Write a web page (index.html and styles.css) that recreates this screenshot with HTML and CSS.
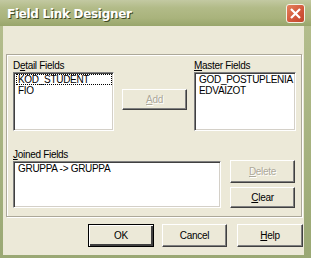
FILE: index.html
```html
<!DOCTYPE html>
<html>
<head>
    <title>Field Link Designer</title>
    <link rel="stylesheet" href="styles.css">
</head>
<body>
    <div class="window">
        <div class="titlebar">
            <span class="title">Field Link Designer</span>
            <div class="close-btn">
                <svg width="11" height="11" viewBox="0 0 11 11">
                    <path d="M1 1 L10 10 M10 1 L1 10" stroke="#fff" stroke-width="2.2"/>
                </svg>
            </div>
        </div>

        <div class="client">
            <div class="group">
                <div class="top-row">
                    <div class="field-col detail-col">
                        <div class="label">D<u>e</u>tail Fields</div>
                        <div class="listbox detail-list">
                            <div class="item focused">KOD_STUDENT</div>
                            <div class="item">FIO</div>
                        </div>
                    </div>

                    <div class="add-col">
                        <div class="btn disabled add-btn"><u>A</u>dd</div>
                    </div>

                    <div class="field-col master-col">
                        <div class="label"><u>M</u>aster Fields</div>
                        <div class="listbox master-list">
                            <div class="item">GOD_POSTUPLENIA</div>
                            <div class="item">EDVAIZOT</div>
                        </div>
                    </div>
                </div>

                <div class="bottom-row">
                    <div class="field-col joined-col">
                        <div class="label"><u>J</u>oined Fields</div>
                        <div class="listbox joined-list">
                            <div class="item">GRUPPA -&gt; GRUPPA</div>
                        </div>
                    </div>

                    <div class="side-buttons">
                        <div class="btn disabled delete-btn"><u>D</u>elete</div>
                        <div class="btn clear-btn"><u>C</u>lear</div>
                    </div>
                </div>
            </div>

            <div class="dialog-buttons">
                <div class="btn default">OK</div>
                <div class="btn">Cancel</div>
                <div class="btn"><u>H</u>elp</div>
            </div>
        </div>
    </div>
</body>
</html>
```

FILE: styles.css
```css
body {
    margin: 0;
    font-family: "Liberation Sans", Arial, sans-serif;
    font-size: 10px;
    letter-spacing: -0.3px;
    background-color: #ece9d8;
}

.window {
    width: 311px;
    height: 258px;
    display: flex;
    flex-direction: column;
    background: linear-gradient(to bottom, #b6bf8f 0%, #9aa874 100%);
    box-sizing: border-box;
}

.titlebar {
    height: 26px;
    display: flex;
    align-items: center;
    justify-content: space-between;
    padding: 0 6px 0 7px;
    background: linear-gradient(to bottom, #c3c9a2 0%, #b2bb88 30%, #a9b37c 70%, #98a56b 100%);
}

.title {
    color: #fff;
    font-family: "DejaVu Sans", sans-serif;
    font-weight: bold;
    font-size: 12px;
    letter-spacing: -0.3px;
    text-shadow: 1px 1px 0 #3f4a25;
    margin-top: 1px;
}

.close-btn {
    width: 17px;
    height: 17px;
    border: 1px solid #f4f1e6;
    border-radius: 3px;
    background: linear-gradient(135deg, #e5825c 0%, #d1553a 60%, #c2452b 100%);
    display: flex;
    align-items: center;
    justify-content: center;
    margin-top: 1px;
}

.client {
    flex: 1;
    margin: 0 7px 3px 3px;
    background-color: #ece9d8;
    padding: 28px 1px 0 3px;
    display: flex;
    flex-direction: column;
}

.group {
    width: 296px;
    height: 163px;
    border: 1px solid #aca899;
    box-shadow: 1px 1px 0 #fff, inset 1px 1px 0 #fff;
    box-sizing: border-box;
    padding: 4px 5px 0 6px;
}

.label {
    height: 13px;
    line-height: 13px;
    color: #000;
}

.listbox {
    background-color: #fff;
    border-top: 1px solid #808080;
    border-left: 1px solid #808080;
    border-bottom: 1px solid #fff;
    border-right: 1px solid #fff;
    box-shadow: inset 1px 1px 0 #404040, inset -1px -1px 0 #d4d0c8;
    box-sizing: border-box;
    padding: 1px 1px 0 1px;
}

.item {
    height: 11px;
    line-height: 11px;
    padding: 0 2px;
    margin-left: 1px;
}

.item.focused {
    outline: 1px dotted #000;
    outline-offset: -1px;
}

.top-row {
    display: flex;
    height: 72px;
}

.detail-col {
    width: 101px;
}

.detail-list,
.master-list {
    height: 59px;
}

.add-col {
    padding: 30px 7px 0 8px;
}

.add-btn {
    width: 65px;
    height: 21px;
}

.master-col {
    width: 102px;
}

.bottom-row {
    display: flex;
    margin-top: 17px;
}

.joined-col {
    width: 208px;
}

.joined-list {
    height: 47px;
}

.side-buttons {
    display: flex;
    flex-direction: column;
    gap: 4px;
    padding: 12px 0 0 9px;
}

.delete-btn {
    width: 65px;
    height: 23px;
}

.clear-btn {
    width: 65px;
    height: 21px;
}

.btn {
    display: flex;
    align-items: center;
    justify-content: center;
    background-color: #ece9d8;
    border-top: 1px solid #fff;
    border-left: 1px solid #fff;
    border-bottom: 1px solid #404040;
    border-right: 1px solid #404040;
    box-shadow: inset -1px -1px 0 #808080;
    box-sizing: border-box;
    color: #000;
}

.btn.disabled {
    color: #aca899;
    text-shadow: 1px 1px 0 #fff;
}

.btn.default {
    border: 1px solid #000;
    box-shadow: inset 1px 1px 0 #fff, inset -2px -2px 0 #404040, inset -1px -1px 0 #808080;
}

.dialog-buttons {
    display: flex;
    justify-content: flex-end;
    gap: 8px;
    padding: 7px 0 0 0;
}

.dialog-buttons .btn {
    width: 66px;
    height: 23px;
}

.dialog-buttons .btn:nth-child(2) {
    width: 65px;
    margin-right: 2px;
}
```
